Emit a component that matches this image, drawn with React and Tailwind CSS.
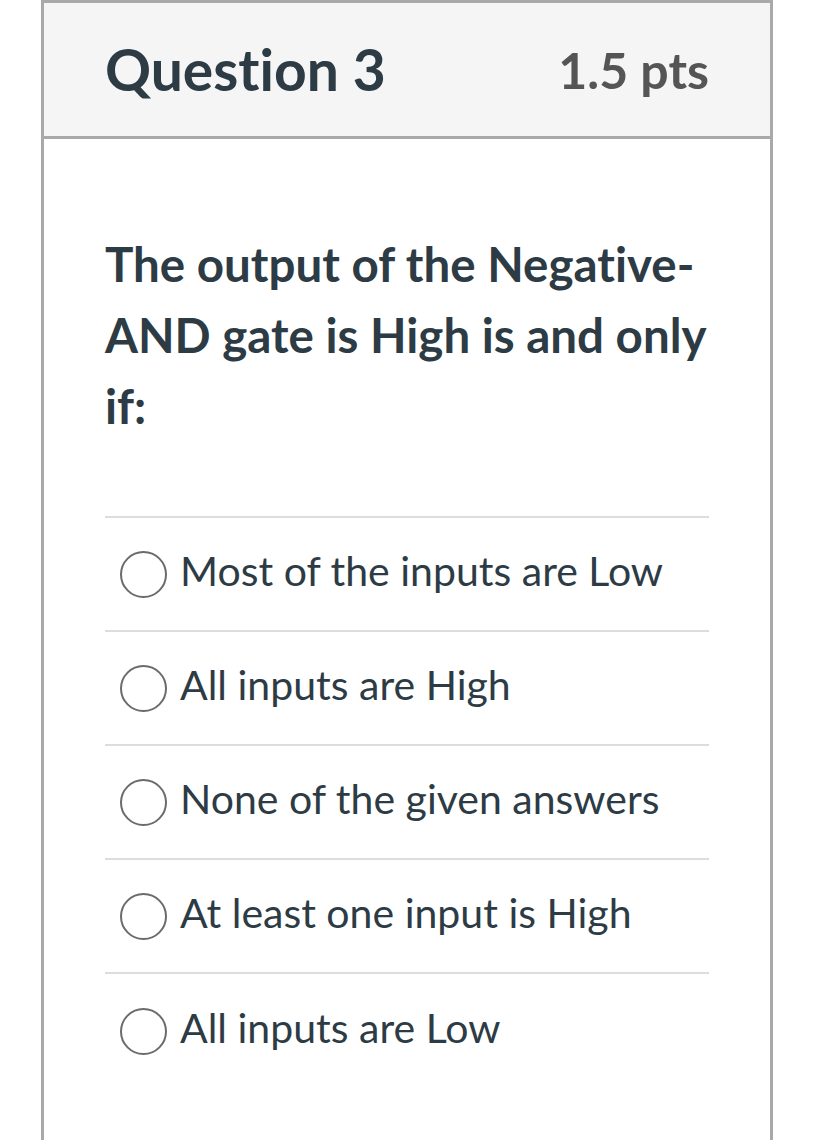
export default function App() {
  const answers = [
    "Most of the inputs are Low",
    "All inputs are High",
    "None of the given answers",
    "At least one input is High",
    "All inputs are Low",
  ];
  return (
    <div className="w-[821px] h-[1140px] bg-white overflow-hidden [font-variant-ligatures:none]" style={{ fontFamily: "Lato, 'Noto Sans', sans-serif" }}>
      <div className="ml-[41px] w-[732px] h-[1160px] border-[3px] border-[#a9a9a9] border-b-0">
        <div className="h-[136px] bg-[#f5f5f5] border-b-[3px] border-[#a9a9a9] flex items-center justify-between pl-[61px] pr-[61px]">
          <span className="text-[57px] font-bold text-[#2d3b45] leading-none">Question 3</span>
          <span className="text-[50px] font-bold text-[#555555] leading-none">1.5 pts</span>
        </div>
        <div className="pl-[61px] pr-[61px] pt-[89px]">
          <p className="w-[625px] text-[47.5px] font-bold text-[#2d3b45] leading-[71px]">
            The output of the Negative-AND gate is High is and only if:
          </p>
          <div className="mt-[75px] border-t-2 border-[#dddddd]">
            {answers.map((a, i) => (
              <div key={a} className={"h-[114px] flex items-center pl-[15px] " + (i < answers.length - 1 ? "border-b-2 border-[#dddddd]" : "")}>
                <span className="w-[47px] h-[47px] rounded-full border-2 border-[#6b6b6b] shrink-0" />
                <span className="ml-[13px] mb-[7px] text-[41px] text-[#2d3b45]">{a}</span>
              </div>
            ))}
          </div>
        </div>
      </div>
    </div>
  );
}
